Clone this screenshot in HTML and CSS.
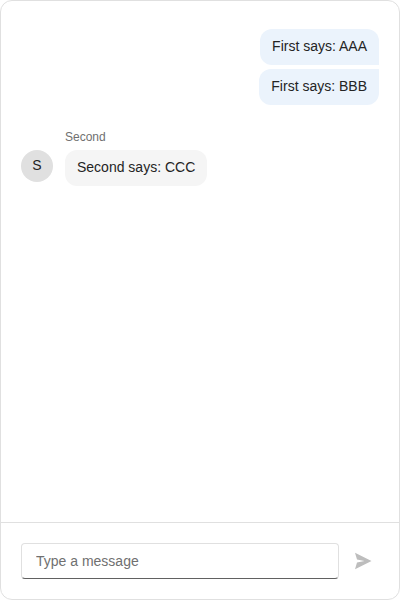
FILE: index.html
```html
<!DOCTYPE html>
<html lang="en">
<head>
<meta charset="utf-8">
<title>Chat</title>
<link rel="stylesheet" href="styles.css">
</head>
<body>
<main class="chat">
  <section class="messages">
    <div class="group own">
      <div class="bubble">First says: AAA</div>
      <div class="bubble last">First says: BBB</div>
    </div>
    <div class="group">
      <div class="avatar">S</div>
      <div class="content">
        <div class="author">Second</div>
        <div class="bubble">Second says: CCC</div>
      </div>
    </div>
  </section>
  <form class="composer">
    <input class="field" type="text" placeholder="Type a message">
    <button class="send" type="button" aria-label="Send">
      <svg width="20" height="20" viewBox="0 0 20 20"><path d="M2 1.8L18.5 10L2 18.2L4 11.4L11.5 10L4 8.6Z" fill="#bdbdbd"/></svg>
    </button>
  </form>
</main>
</body>
</html>
```

FILE: styles.css
```css
* {
  box-sizing: border-box;
}

body {
  margin: 0;
  background: #fff;
  font: 14px/20px "Liberation Sans", Arial, sans-serif;
  color: #242424;
}

.chat {
  display: flex;
  flex-direction: column;
  height: 600px;
  border: 1px solid #e0e0e0;
  border-radius: 12px;
  overflow: hidden;
}

.messages {
  flex: 1;
  display: flex;
  flex-direction: column;
  gap: 24px;
  padding: 28px 20px;
}

.group {
  display: flex;
  align-items: flex-end;
  gap: 12px;
}

.own {
  flex-direction: column;
  gap: 4px;
}

.bubble {
  height: 36px;
  padding: 7px 12px 9px;
  border-radius: 12px;
  background: #f5f5f5;
}

.own .bubble {
  background: #ebf3fc;
  border-bottom-right-radius: 0;
}

.own .last {
  border-radius: 12px 0 12px 12px;
}

.avatar {
  width: 32px;
  height: 32px;
  margin-bottom: 4px;
  border-radius: 50%;
  background: #e0e0e0;
  line-height: 31px;
  text-align: center;
}

.author {
  height: 21px;
  font-size: 12px;
  line-height: 16px;
  color: #707070;
}

.composer {
  display: flex;
  align-items: center;
  gap: 8px;
  height: 77px;
  padding: 0 20px;
  border-top: 1px solid #e0e0e0;
}

.field {
  flex: 1;
  height: 36px;
  min-width: 0;
  padding: 0 14px;
  border: 1px solid #e0e0e0;
  border-bottom-color: #616161;
  border-radius: 4px;
  background: #fff;
  font: inherit;
  outline: 0;
}

.field::placeholder {
  color: #707070;
  opacity: 1;
}

.send {
  display: flex;
  align-items: center;
  justify-content: center;
  width: 32px;
  height: 36px;
  padding: 0;
  border: 0;
  background: transparent;
}
```
